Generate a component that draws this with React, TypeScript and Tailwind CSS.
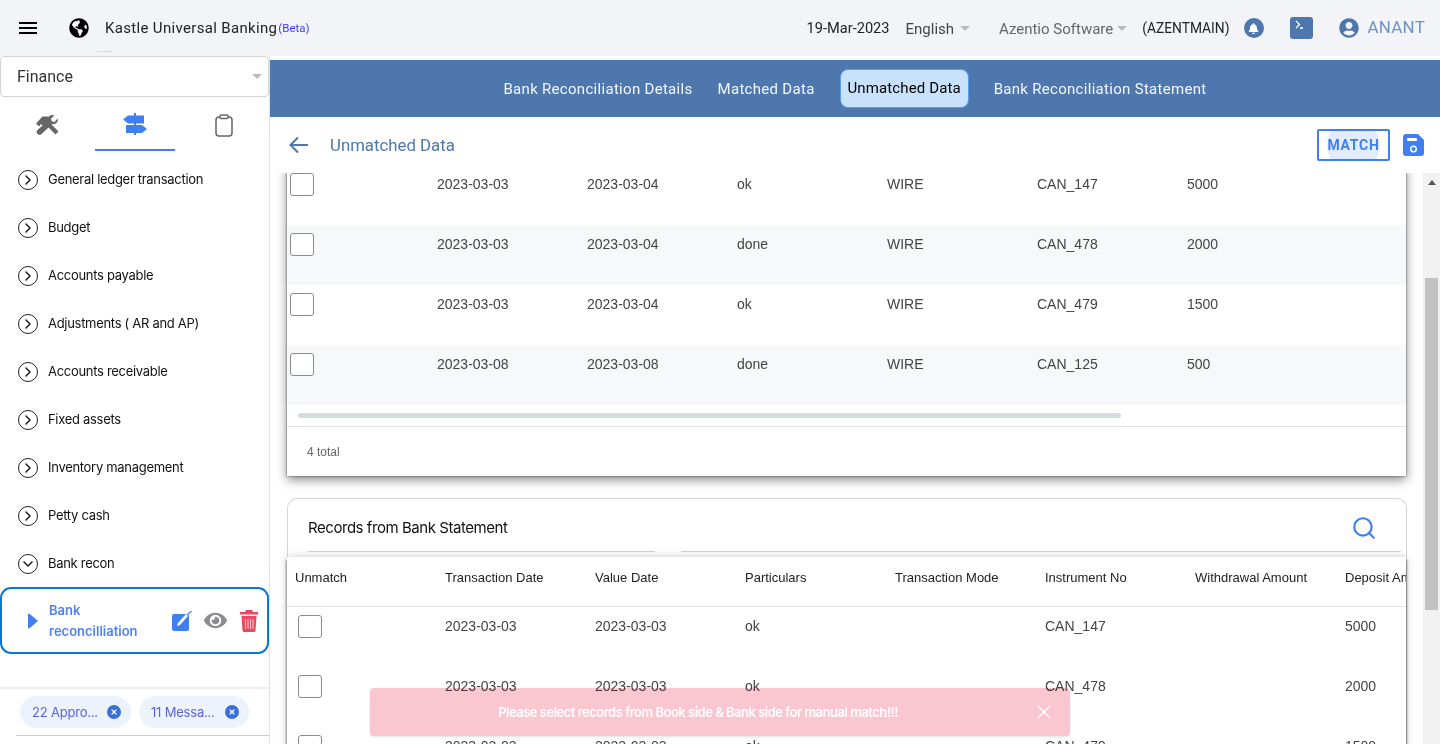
import { ChevronDown, ChevronRight, Search, X } from "lucide-react";
import { FaGlobeAmericas, FaUserCircle, FaBell, FaEye } from "react-icons/fa";

const menuItems = [
  "General ledger transaction",
  "Budget",
  "Accounts payable",
  "Adjustments ( AR and AP)",
  "Accounts receivable",
  "Fixed assets",
  "Inventory management",
  "Petty cash",
];

const bookRows = [
  ["2023-03-03", "2023-03-04", "ok", "WIRE", "CAN_147", "5000"],
  ["2023-03-03", "2023-03-04", "done", "WIRE", "CAN_478", "2000"],
  ["2023-03-03", "2023-03-04", "ok", "WIRE", "CAN_479", "1500"],
  ["2023-03-08", "2023-03-08", "done", "WIRE", "CAN_125", "500"],
];

const bankRows = [
  ["2023-03-03", "2023-03-03", "ok", "", "CAN_147", "", "5000"],
  ["2023-03-03", "2023-03-03", "ok", "", "CAN_478", "", "2000"],
  ["2023-03-03", "2023-03-03", "ok", "", "CAN_479", "", "1500"],
];

const bankHeaders = [
  "Transaction Date",
  "Value Date",
  "Particulars",
  "Transaction Mode",
  "Instrument No",
  "Withdrawal Amount",
  "Deposit Amount",
];

const Checkbox = () => (
  <div className="w-6 h-[23px] rounded-[3px] border border-[#8a8a8a] bg-white shrink-0" />
);

const Caret = () => (
  <span className="block w-0 h-0 border-x-[5px] border-x-transparent border-t-[5px] border-t-[#bbb]" />
);

const Header = () => (
  <header className="relative h-14 bg-[#f3f4f8] flex items-center shrink-0 font-['Roboto',sans-serif]">
    <svg viewBox="0 0 18 12" className="ml-[19px] w-[18px] h-3" fill="black">
      <rect width="18" height="2" />
      <rect y="5" width="18" height="2" />
      <rect y="10" width="18" height="2" />
    </svg>
    <FaGlobeAmericas className="ml-[32px] w-5 h-5 text-black" />
    <span className="ml-4 text-[15px] tracking-[0.33px] text-[#222]">Kastle Universal Banking</span>
    <span className="ml-[1px] mt-0.5 text-[11.5px] text-[#3d3df0]">(Beta)</span>
    <div className="ml-auto flex items-center">
      <span className="pt-px text-[14.6px] text-[#222]">19-Mar-2023</span>
      <span className="ml-4 pt-0.5 text-[15px] text-[#444]">English</span>
      <span className="ml-1.5">
        <Caret />
      </span>
      <span className="ml-[29px] pt-0.5 text-[15px] text-[#666]">Azentio Software</span>
      <span className="ml-1">
        <Caret />
      </span>
      <span className="ml-[15px] text-[13.8px] text-[#222]">(AZENTMAIN)</span>
      <span className="ml-3.5 w-5 h-5 rounded-full bg-[#4d77ad] flex items-center justify-center">
        <FaBell className="w-[11px] h-[11px] text-white" />
      </span>
      <span className="ml-[26px] w-[23px] h-[22px] rounded-[3px] bg-[#4d77ad] flex items-start">
        <svg viewBox="0 0 23 22" className="w-[23px] h-[22px]" fill="none" stroke="white" strokeWidth="1.3">
          <path d="M6 4l3.5 3.5L6 11M10 11h3" />
        </svg>
      </span>
      <FaUserCircle className="ml-[26px] w-5 h-5 text-[#4d77ad]" />
      <span className="ml-[9px] mr-[15px] text-[17px] tracking-[0.2px] text-[#6f93c0]">ANANT</span>
    </div>
    <div className="absolute left-[97px] top-[51px] w-4 h-px bg-[#d8d8d8]" />
  </header>
);

const Chip = ({ label, width }: { label: string; width: string }) => (
  <div className={`h-8 ${width} rounded-full bg-[#edf3fc] flex items-center pl-3 text-[13px] tracking-[-0.2px] text-[#5a63e0]`}>
    <span className="pt-px">{label}</span>
    <span className="ml-auto mr-[10px] w-3.5 h-3.5 rounded-full bg-[#3a6fd8] flex items-center justify-center">
      <X className="w-2 h-2 text-white" strokeWidth={3.5} />
    </span>
  </div>
);

const Sidebar = () => (
  <aside className="w-[270px] shrink-0 border-r border-[#e2e2e2] bg-white flex flex-col font-['Inter',sans-serif]">
    <div className="h-[41px] border border-[#d4d4d4] rounded-[4px] flex items-center pl-4 pr-1.5 shrink-0">
      <span className="text-[16px] text-[#333] font-['Roboto',sans-serif]">Finance</span>
      <span className="ml-auto">
        <Caret />
      </span>
    </div>
    <div className="h-[54px] flex shrink-0">
      <div className="w-[95px] flex items-center justify-center">
        <svg viewBox="0 0 24 20" className="w-6 h-5 mt-[1px] -ml-[2px]" fill="#666">
          <path d="M20.5 19.5L8 7l3-3 12.5 12.5z" />
          <path d="M1 8.5L7.5 1.5H13l1.5 2.5-6.5 7-2-2-2 2.5z" />
          <path d="M2 15.5L13 5.5q-1-4 3-5.2 2-.5 3.5.2L16 3.5l.8 2.7 2.7.7 3-3.3q.8 2.3-.5 4-1.8 2.2-5 1.6L6 19.5q-1.5.8-3.2-.3-1.8-1.7-.8-3.7z" />
        </svg>
      </div>
      <div className="w-20 flex items-center justify-center border-b-2 border-[#3f7ff2]">
        <svg viewBox="0 0 24 22" className="w-6 h-[22px] mt-[1px]" fill="#3f7ff2">
          <rect x="11" y="0" width="2" height="22" />
          <path d="M0 6.5L5 2.5H21V10.5H5z" />
          <path d="M3 12H19L24 16 19 20H3z" />
        </svg>
      </div>
      <div className="flex-1 flex items-center justify-center pl-[4px]">
        <svg viewBox="0 0 18 23" className="w-[18px] h-[23px] mt-[2px]" fill="none" stroke="#666" strokeWidth="1.5">
          <rect x="1" y="3" width="16" height="19" rx="3" />
          <rect x="5" y="1" width="8" height="3.5" rx="1" fill="white" />
        </svg>
      </div>
    </div>
    <nav className="flex flex-col flex-1 pt-[5px]">
      {menuItems.map((item) => (
        <div key={item} className="h-12 flex items-center pl-[18px] shrink-0">
          <span className="w-5 h-5 rounded-full border-[1.7px] border-[#222] flex items-center justify-center">
            <ChevronRight className="w-4 h-4 text-[#222]" strokeWidth={2.3} />
          </span>
          <span className="ml-2.5 text-[13px] tracking-[-0.3px] text-[#111]">{item}</span>
        </div>
      ))}
      <div className="h-12 flex items-center pl-[18px] shrink-0">
        <span className="w-5 h-5 rounded-full border-[1.7px] border-[#222] flex items-center justify-center">
          <ChevronDown className="w-4 h-4 text-[#222]" strokeWidth={2.3} />
        </span>
        <span className="ml-2.5 text-[13px] tracking-[-0.3px] text-[#111]">Bank recon</span>
      </div>
      <div className="h-[67px] -mt-px border-2 border-[#0a78d0] rounded-[11px] flex items-center shrink-0">
        <svg viewBox="0 0 10 16" className="ml-[26px] w-[10px] h-4 shrink-0" fill="#3f7ff2">
          <path d="M0 1.5Q0 0 1.5 .8L10 8 1.5 15.2Q0 16 0 14.5z" />
        </svg>
        <span className="ml-[11px] w-[113px] text-[13px] leading-[21px] font-semibold text-[#4f80f5]">
          Bank reconcilliation
        </span>
        <svg viewBox="0 0 20 20" className="ml-[10px] w-5 h-5 shrink-0">
          <rect x="0" y="3" width="17" height="17" rx="2" fill="#3f7ff2" />
          <path d="M5 15l1-3 8-9 2 2-8 9z" fill="white" />
          <path d="M15.5 3.5L19.5 0" stroke="#3f7ff2" strokeWidth="1.2" />
        </svg>
        <FaEye className="ml-[12px] w-[23px] h-[23px] text-[#8b8b90]" />
        <svg viewBox="0 0 18 22" className="ml-[13px] w-[18px] h-[22px] shrink-0" fill="#ee4760">
          <path d="M6 0h6l1 2h5v2.5H0V2h5zM1.5 6h15l-1 14.5q-.1 1.5-1.5 1.5H4q-1.4 0-1.5-1.5z" />
          <path d="M5.5 9v10M8 9v10M10.5 9v10M13 9v10" stroke="#f9c0c9" strokeWidth="1.1" />
        </svg>
      </div>
    </nav>
    <div className="h-[57px] shrink-0 border-t-2 border-[#eeeeee] pt-[7px]">
      <div className="pl-5 flex gap-2">
        <Chip label="22 Appro..." width="w-[111px]" />
        <Chip label="11 Messa..." width="w-[110px]" />
      </div>
      <div className="mt-[7px] ml-4 border-t border-[#cccccc]" />
    </div>
  </aside>
);

const Tabs = () => (
  <div className="h-[57px] mt-1 bg-[#4d77ad] flex items-center justify-center gap-[25px] text-[15px] tracking-[0.3px] text-[#f3f6fb] font-['Roboto',sans-serif] shrink-0">
    <span className="pt-px">Bank Reconciliation Details</span>
    <span className="pt-px">Matched Data</span>
    <span className="h-[39px] w-[129px] rounded-[8px] border border-[#5d9bf0] bg-[#c9e2fc] text-black tracking-[0.13px] flex items-center justify-center">
      Unmatched Data
    </span>
    <span className="pt-px">Bank Reconciliation Statement</span>
  </div>
);

const ScrollBar = () => (
  <div className="w-[17px] shrink-0 bg-[#f1f1f1] flex flex-col">
    <div className="h-[19px] flex items-center justify-center">
      <span className="w-0 h-0 border-x-[4px] border-x-transparent border-b-[5px] border-b-[#555]" />
    </div>
    <div className="h-[86px]" />
    <div className="w-[13px] ml-0.5 h-[332px] bg-[#c1c1c1]" />
  </div>
);

const BookCard = () => (
  <div className="-mt-2 ml-[17px] w-[1119px] shrink-0 bg-white shadow-[0_4px_10px_rgba(0,0,0,0.45),0_0_2px_rgba(0,0,0,0.6)] font-['Liberation_Sans',sans-serif]">
    {bookRows.map((row, i) => (
      <div key={i} className={`h-[60px] flex items-start pt-[8px] ${i % 2 === 1 ? "bg-[#f7f8fa]" : "bg-white"}`}>
        <div className="w-[150px] pl-[3px] shrink-0">
          <Checkbox />
        </div>
        <div className="flex pt-[1px] text-[14px] text-[#444]">
          {row.map((cell, j) => (
            <span key={j} className="w-[150px] shrink-0">
              {cell}
            </span>
          ))}
        </div>
      </div>
    ))}
    <div className="h-[21px] flex items-center pl-[11px]">
      <div className="w-[823px] h-[5px] rounded-full bg-[#d5dde0]" />
    </div>
    <div className="h-[50px] border-t border-[#e2e2e2] flex items-center pl-5 text-[12px] text-[#666]">4 total</div>
  </div>
);

const BankCard = () => (
  <div className="mt-[22px] ml-[17px] w-[1120px] shrink-0 h-[300px] rounded-t-[10px] border border-b-0 border-[#d6d6d6] bg-white font-['Liberation_Sans',sans-serif]">
    <div className="h-[53px] ml-5 mr-[5px] flex flex-col justify-between">
      <div className="flex items-center pt-[16px]">
        <span className="text-[15px] text-[#111] font-['Inter',sans-serif] tracking-[-0.45px]">Records from Bank Statement</span>
        <Search className="ml-auto mr-[24px] w-[26px] h-[26px] text-[#3f7ff2]" strokeWidth={2} />
      </div>
      <div className="flex gap-[26px]">
        <div className="w-[347px] border-t border-[#cfcfcf]" />
        <div className="flex-1 border-t border-[#cfcfcf]" />
      </div>
    </div>
    <div className="mt-[5px] -ml-px w-[1119px] overflow-hidden bg-white shadow-[0_0_8px_rgba(0,0,0,0.22),-1px_3px_2px_rgba(0,0,0,0.35),1px_3px_2px_rgba(0,0,0,0.35)]">
      <div className="h-[50px] border-b border-[#e2e2e2] flex items-start pl-2 pt-[11px] text-[13px] text-[#222]">
        <span className="w-[150px] shrink-0">Unmatch</span>
        {bankHeaders.map((h) => (
          <span key={h} className="w-[150px] shrink-0 whitespace-nowrap">
            {h}
          </span>
        ))}
      </div>
      {bankRows.map((row, i) => (
        <div key={i} className="h-[60px] flex items-start pt-[8px]">
          <div className="w-[158px] pl-[11px] shrink-0">
            <Checkbox />
          </div>
          <div className="flex pt-[1px] text-[14px] text-[#444]">
            {row.map((cell, j) => (
              <span key={j} className="w-[150px] shrink-0">
                {cell}
              </span>
            ))}
          </div>
        </div>
      ))}
    </div>
  </div>
);

const Toast = () => (
  <div className="absolute left-[100px] bottom-[8px] w-[700px] h-[48px] flex items-center justify-center text-white text-[13px] tracking-[-0.5px] font-semibold font-['Inter',sans-serif]">
    <div className="absolute inset-0 rounded-[4px] bg-[#fac6cf] mix-blend-multiply shadow-sm" />
    <span className="relative -ml-[44px] pt-px">Please select records from Book side &amp; Bank side for manual match!!!</span>
    <X className="absolute right-[15px] w-[22px] h-[22px]" strokeWidth={1.5} />
  </div>
);

export default function App() {
  return (
    <div className="w-[1440px] h-[744px] overflow-hidden bg-white flex flex-col">
      <Header />
      <div className="flex flex-1 min-h-0">
        <Sidebar />
        <main className="flex-1 min-w-0 flex flex-col relative">
          <Tabs />
          <div className="h-14 flex items-center shrink-0 font-['Roboto',sans-serif]">
            <svg viewBox="0 0 19 18" className="ml-[19px] w-[19px] h-[18px]" fill="none" stroke="#4d77ad" strokeWidth="2">
              <path d="M19 9H2M9 1.5L1.5 9 9 16.5" />
            </svg>
            <span className="ml-[22px] pt-px text-[16.8px] text-[#4d77ad]">Unmatched Data</span>
            <button className="ml-auto w-[73px] h-[32px] border-2 border-[#3f7ff2] rounded-[2px] overflow-hidden flex items-center justify-center bg-white">
              <span className="w-[53px] h-[53px] shrink-0 rounded-full bg-[#e3ecfb] flex items-center justify-center text-[14px] font-bold tracking-[0.7px] text-[#3f7ff2]">
                MATCH
              </span>
            </button>
            <svg viewBox="0 0 21 22" className="ml-[13px] mr-[16px] w-[21px] h-[22px]">
              <path d="M3 0h12l6 6v13q0 3-3 3H3q-3 0-3-3V3q0-3 3-3z" fill="#3f7ff2" />
              <rect x="4" y="4" width="10" height="3" rx="1" fill="white" />
              <circle cx="10.5" cy="15" r="2.8" fill="none" stroke="white" strokeWidth="1.4" />
            </svg>
          </div>
          <div className="flex flex-1 min-h-0 overflow-hidden">
            <div className="flex-1 min-w-0 flex flex-col">
              <BookCard />
              <BankCard />
            </div>
            <ScrollBar />
          </div>
          <Toast />
        </main>
      </div>
    </div>
  );
}
